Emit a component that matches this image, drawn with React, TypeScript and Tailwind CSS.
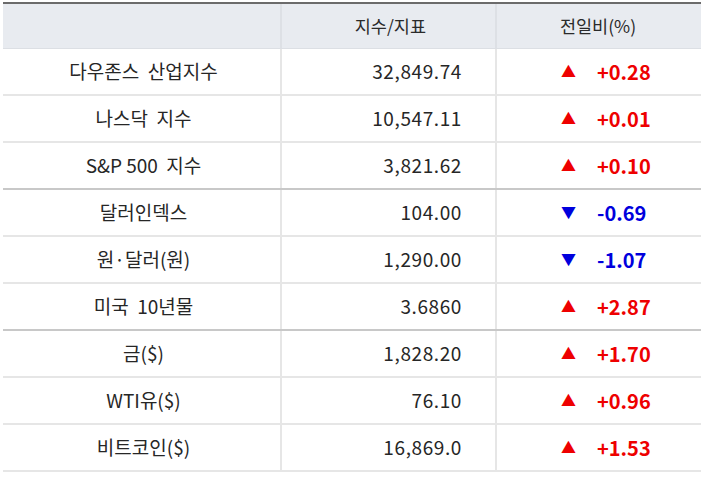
import React from "react";

type Row = { name: string; value: string; change: string; up: boolean; groupEnd?: boolean };

const rows: Row[] = [
  { name: "다우존스  산업지수", value: "32,849.74", change: "+0.28", up: true },
  { name: "나스닥  지수", value: "10,547.11", change: "+0.01", up: true },
  { name: "S&P 500  지수", value: "3,821.62", change: "+0.10", up: true, groupEnd: true },
  { name: "달러인덱스", value: "104.00", change: "-0.69", up: false },
  { name: "원·달러(원)", value: "1,290.00", change: "-1.07", up: false },
  { name: "미국  10년물", value: "3.6860", change: "+2.87", up: true, groupEnd: true },
  { name: "금($)", value: "1,828.20", change: "+1.70", up: true },
  { name: "WTI유($)", value: "76.10", change: "+0.96", up: true },
  { name: "비트코인($)", value: "16,869.0", change: "+1.53", up: true },
];

export default function App() {
  return (
    <div
      className="w-[704px] h-[477px] bg-white pt-[2px] pl-[3px] pr-[3px]"
      style={{ fontFamily: '"Noto Sans CJK KR", "Noto Sans", sans-serif' }}
    >
      <div className="border-t-2 border-[#6b6b6b]">
        <div className="grid grid-cols-[279px_215px_1fr] h-[45px] bg-[#e8ebf0] border-b border-[#dcdfe4] text-[17.5px] text-[#2a2a2a]">
          <div className="border-r-2 border-[#dde0e5]"></div>
          <div className="border-r-2 border-[#dde0e5] flex items-center justify-end pr-[69px]">지수/지표</div>
          <div className="flex items-center justify-center pr-[2px]">전일비(%)</div>
        </div>
        {rows.map((r, i) => (
          <div
            key={i}
            className={
              "grid grid-cols-[279px_215px_1fr] h-[47px] text-[19px] text-[#262626] " +
              (r.groupEnd ? "border-b-2 border-[#c8c8c8]" : "border-b-2 border-[#e6e6e6]")
            }
          >
            <div className="border-r-2 border-[#e6e6e6] flex items-center justify-center whitespace-pre pl-[4px]">
              {r.name}
            </div>
            <div className="border-r-2 border-[#e6e6e6] flex items-center justify-end pr-[33px] tracking-[0.6px]">
              {r.value}
            </div>
            <div className="flex items-center pl-[64px]">
              <span
                className={
                  "text-[15px] w-[36px] " + (r.up ? "text-[#ee0000]" : "text-[#0000dd]")
                }
              >
                {r.up ? "▲" : "▼"}
              </span>
              <span className={"font-bold text-[20px] " + (r.up ? "text-[#ee0000]" : "text-[#0000dd]")}>
                {r.change}
              </span>
            </div>
          </div>
        ))}
      </div>
    </div>
  );
}
